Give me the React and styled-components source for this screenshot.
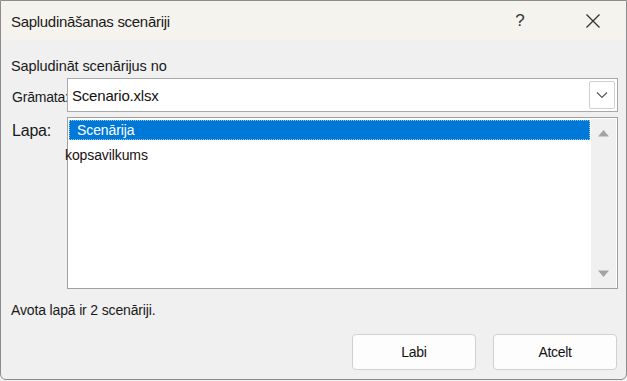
import React from "react";
import styled, { createGlobalStyle } from "styled-components";

const Global = createGlobalStyle`
  html, body { margin: 0; padding: 0; background: #f0f0f0; }
  body { font-family: "Liberation Sans", Arial, sans-serif; color: #1a1a1a; }
  * { box-sizing: border-box; }
`;

const Window = styled.div`
  width: 627px;
  height: 380px;
  border: 1px solid #8c8c8c;
  border-radius: 0 0 6px 6px;
  background: #f0f0f0;
  display: flex;
  flex-direction: column;
  overflow: hidden;
`;

const TitleBar = styled.div`
  height: 39px;
  background: #f5f3ee;
  display: flex;
  align-items: center;
  padding-left: 10px;
`;

const Title = styled.div`
  flex: 1;
  font-size: 15px;
  letter-spacing: -0.3px;
  color: #1a1a1a;
  padding-top: 2px;
`;

const TitleButton = styled.div`
  width: 46px;
  height: 39px;
  display: flex;
  align-items: center;
  justify-content: center;
  color: #333;
  font-size: 17px;
  margin-right: ${(p) => p.$mr || 0}px;
`;

const Body = styled.div`
  flex: 1;
  display: flex;
  flex-direction: column;
  padding: 18px 8px 0 10px;
`;

const Heading = styled.div`
  font-size: 14.5px;
  line-height: 16px;
  height: 20px;
  letter-spacing: -0.1px;
`;

const Form = styled.div`
  display: grid;
  grid-template-columns: 56px 551px;
  grid-template-rows: 34px 172px;
  row-gap: 5px;
`;

const Label = styled.div`
  font-size: ${(p) => p.$size || 14}px;
  display: flex;
  align-items: ${(p) => (p.$top ? "flex-start" : "center")};
  padding-top: ${(p) => p.$pt || 0}px;
  padding-left: 1px;
  white-space: nowrap;
  overflow: visible;
  letter-spacing: -0.2px;
`;

const Combo = styled.div`
  border: 1px solid #a9a9a9;
  background: #fff;
  display: flex;
  align-items: center;
  padding: 2px 2px 2px 4px;
`;

const ComboText = styled.div`
  flex: 1;
  font-size: 15px;
  letter-spacing: -0.2px;
  color: #111;
`;

const DropButton = styled.div`
  width: 26px;
  height: 28px;
  border: 1px solid #cfcfcf;
  border-radius: 2px;
  display: flex;
  align-items: center;
  justify-content: center;
`;

const ListBox = styled.div`
  border: 1px solid #a0a0a0;
  background: #fff;
  display: flex;
  padding: 2px 1px 0 1px;
`;

const Items = styled.div`
  flex: 1;
  display: flex;
  flex-direction: column;
`;

const Item = styled.div`
  height: 20px;
  font-size: 14px;
  line-height: 18px;
  padding-left: 7px;
  letter-spacing: -0.1px;
  background: ${(p) => (p.$selected ? "#0078d7" : "transparent")};
  color: ${(p) => (p.$selected ? "#fff" : "#1a1a1a")};
  border: 1px dotted ${(p) => (p.$selected ? "#9cc8f0" : "transparent")};
`;

const Wrapped = styled.div`
  font-size: 14px;
  line-height: 18px;
  margin: 6px 0 0 -4px;
  color: #1a1010;
  letter-spacing: -0.1px;
`;

const ScrollBar = styled.div`
  width: 25px;
  background: #f0f0f0;
  margin-left: 1px;
  margin-top: -1px;
  display: flex;
  flex-direction: column;
  justify-content: space-between;
  align-items: center;
  padding: 10px 0 10px;
`;

const Status = styled.div`
  font-size: 14px;
  margin-top: 13px;
  height: 17px;
  letter-spacing: -0.15px;
`;

const Buttons = styled.div`
  display: flex;
  justify-content: flex-end;
  gap: 17px;
  margin-top: 15px;
  padding-right: 1px;
`;

const Button = styled.div`
  width: 124px;
  height: 36px;
  background: #fdfdfd;
  border: 1px solid #d0d0d0;
  border-radius: 4px;
  display: flex;
  align-items: center;
  justify-content: center;
  font-size: 14px;
  letter-spacing: -0.3px;
  color: #111;
`;

const Tri = ({ up }) => (
  <svg width="13" height="8" viewBox="0 0 13 8">
    <path d={up ? "M1 7.5 L6.5 1 L12 7.5 Z" : "M1 0.5 L6.5 7 L12 0.5 Z"} fill="#a3a3a3" />
  </svg>
);

export default function App() {
  return (
    <>
      <Global />
      <Window>
        <TitleBar>
          <Title>Sapludināšanas scenāriji</Title>
          <TitleButton $mr={27}>?</TitleButton>
          <TitleButton $mr={10}>
            <svg width="16" height="16" viewBox="0 0 16 16">
              <path d="M1.5 1.5 L14.5 14.5 M14.5 1.5 L1.5 14.5" stroke="#333" strokeWidth="1.3" />
            </svg>
          </TitleButton>
        </TitleBar>
        <Body>
          <Heading>Sapludināt scenārijus no</Heading>
          <Form>
            <Label $size={14} $pt={4}>Grāmata:</Label>
            <Combo>
              <ComboText>Scenario.xlsx</ComboText>
              <DropButton>
                <svg width="12" height="8" viewBox="0 0 12 8">
                  <path d="M1 1.5 L6 6.5 L11 1.5" stroke="#555" strokeWidth="1.1" fill="none" />
                </svg>
              </DropButton>
            </Combo>
            <Label $size={16} $top $pt={5}>Lapa:</Label>
            <ListBox>
              <Items>
                <Item $selected>Scenārija</Item>
                <Wrapped>kopsavilkums</Wrapped>
              </Items>
              <ScrollBar>
                <Tri up />
                <Tri />
              </ScrollBar>
            </ListBox>
          </Form>
          <Status>Avota lapā ir 2 scenāriji.</Status>
          <Buttons>
            <Button>Labi</Button>
            <Button>Atcelt</Button>
          </Buttons>
        </Body>
      </Window>
    </>
  );
}
